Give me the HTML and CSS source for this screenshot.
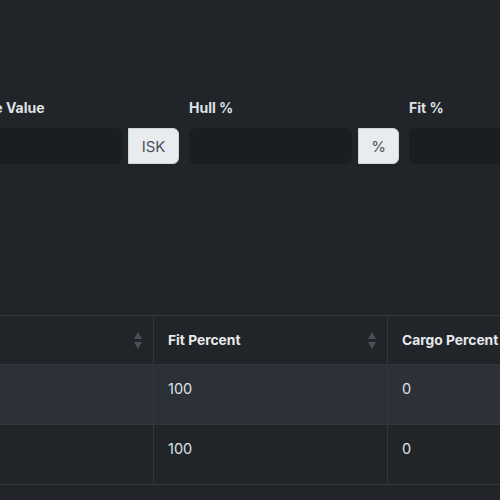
FILE: index.html
```html
<!DOCTYPE html>
<html>
<head>
<meta charset="utf-8">
<link rel="stylesheet" href="styles.css">
</head>
<body>
<div class="page">
  <div class="form-row">
    <div class="field">
      <label class="lbl">Base Value</label>
      <div class="group">
        <div class="input"></div>
        <div class="addon wide">ISK</div>
      </div>
    </div>
    <div class="field">
      <label class="lbl">Hull %</label>
      <div class="group">
        <div class="input"></div>
        <div class="addon">%</div>
      </div>
    </div>
    <div class="field">
      <label class="lbl">Fit %</label>
      <div class="group">
        <div class="input"></div>
        <div class="addon">%</div>
      </div>
    </div>
  </div>
  <table class="tbl">
    <thead>
      <tr>
        <th class="c1"><span class="sort"></span></th>
        <th class="c2">Fit Percent<span class="sort"></span></th>
        <th class="c3">Cargo Percent</th>
      </tr>
    </thead>
    <tbody>
      <tr class="odd">
        <td></td><td>100</td><td>0</td>
      </tr>
      <tr>
        <td></td><td>100</td><td>0</td>
      </tr>
    </tbody>
  </table>
</div>
</body>
</html>
```
FILE: styles.css
```css
html, body {
  margin: 0;
  padding: 0;
  background: #212529;
  overflow: hidden;
  width: 500px;
  height: 500px;
}
.page {
  font-family: "Inter", "Liberation Sans", sans-serif;
  color: #dee2e6;
  padding-top: 98px;
}
.form-row {
  display: flex;
  gap: 10px;
  margin-left: -31px;
}
.field {
  width: 210px;
  flex: none;
  display: flex;
  flex-direction: column;
}
.lbl {
  font-weight: 700;
  font-size: 14px;
  line-height: 20px;
  color: #dee2e6;
  margin-bottom: 10px;
  white-space: nowrap;
}
.group {
  display: flex;
  gap: 6px;
  height: 36px;
}
.input {
  flex: 1;
  background: #1b1e21;
  border-radius: 6px;
}
.addon {
  width: 41px;
  flex: none;
  background: #e9ecef;
  border: 1px solid #ced4da;
  box-sizing: border-box;
  border-radius: 0 6px 6px 0;
  color: #495057;
  font-size: 15px;
  display: flex;
  align-items: center;
  justify-content: center;
}
.addon.wide {
  width: 51px;
}
.tbl {
  margin-top: 151px;
  border-collapse: collapse;
  margin-left: -81px;
  table-layout: fixed;
  width: 815px;
}
.tbl th, .tbl td {
  border: 1px solid #32373c;
  text-align: left;
  vertical-align: top;
  padding: 0 14px;
  position: relative;
  white-space: nowrap;
}
.tbl th {
  height: 48px;
  font-size: 13.8px;
  font-weight: 700;
  vertical-align: middle;
  color: #e6e9ec;
}
.tbl td {
  height: 47px;
  font-size: 14.5px;
  line-height: 24px;
  padding-top: 12px;
  color: #dee2e6;
}
.tbl tr.odd td {
  background: #2c3137;
}
.c1 { width: 206px; }
.c2 { width: 205px; }
.c3 { width: 372px; }
.tbl tr > :first-child { border-left: none; }
.sort {
  position: absolute;
  right: 11px;
  top: 16px;
  width: 8px;
  height: 17px;
}
.sort::before, .sort::after {
  content: "";
  position: absolute;
  left: 0;
  border-left: 4px solid transparent;
  border-right: 4px solid transparent;
}
.sort::before {
  top: 0;
  border-bottom: 7px solid #4a4f55;
}
.sort::after {
  bottom: 0;
  border-top: 7px solid #4a4f55;
}
```
